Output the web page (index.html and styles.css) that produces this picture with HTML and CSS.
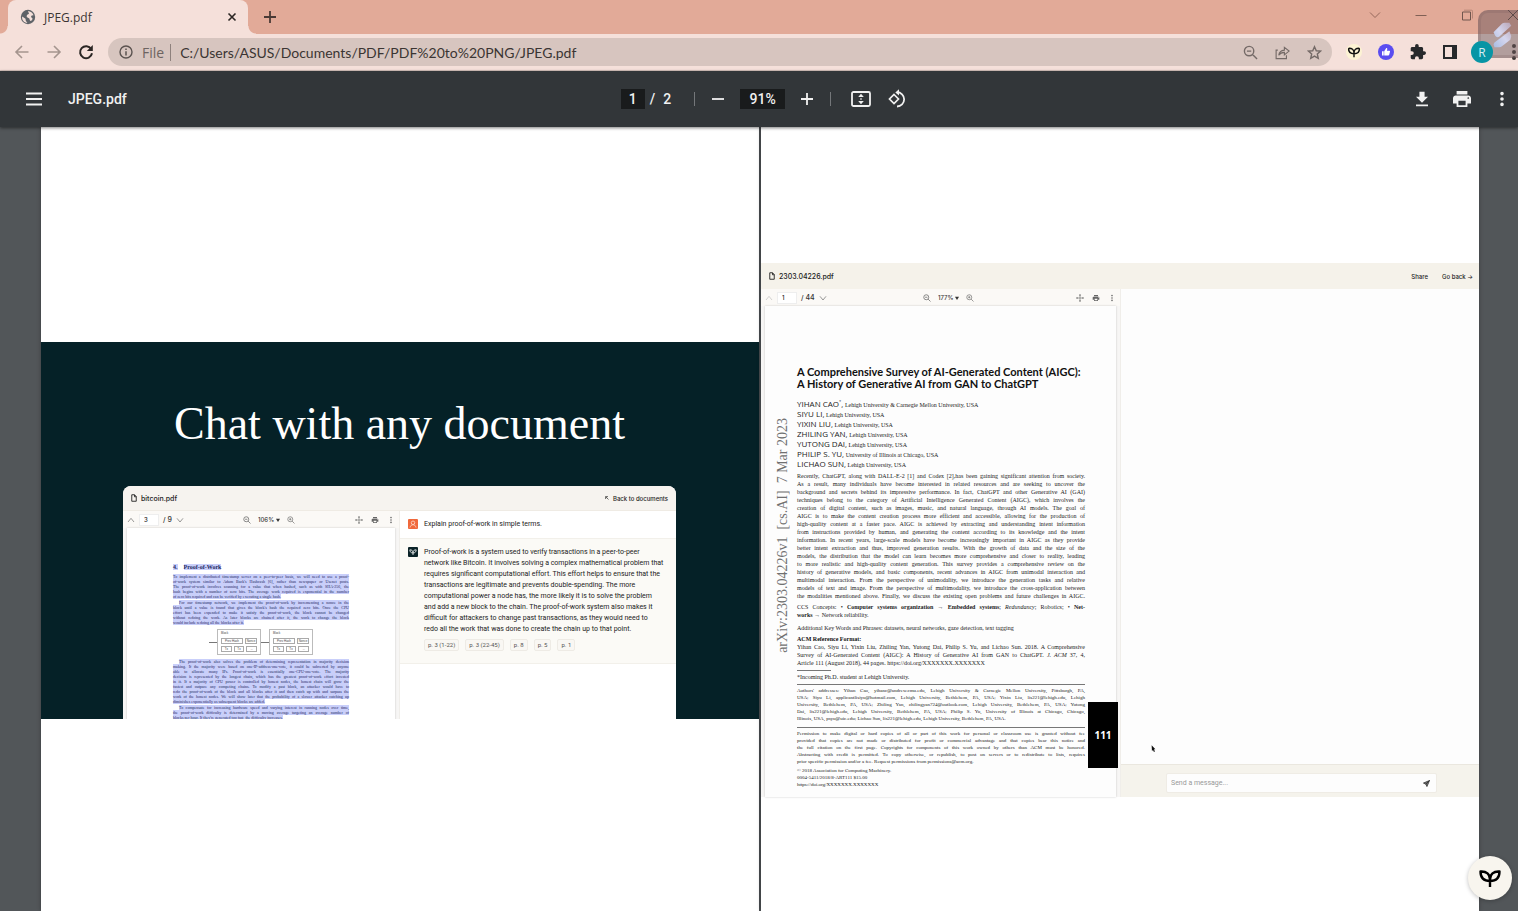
FILE: index.html
```html
<!DOCTYPE html>
<html lang="en">
<head>
<meta charset="utf-8">
<title>JPEG.pdf</title>
<link rel="stylesheet" href="styles.css">
</head>
<body>
<svg class="defs" aria-hidden="true">
  <symbol id="sprout" viewBox="0 0 24 24"><path d="M12 21v-8M12 15C6 15 2.500 11.500 2.500 5.500 8.500 5 12 8.500 12 13.500M12 15c6 0 9.500-3.500 9.500-9.500C15.500 5 12 8.500 12 13.500" fill="none" stroke="currentColor" stroke-width="2.400" stroke-linejoin="round"/></symbol>
  <symbol id="up" viewBox="0 0 12 12"><path d="M1.500 9 6 3.500 10.500 9" fill="none" stroke="currentColor"/></symbol>
  <symbol id="down" viewBox="0 0 12 12"><path d="M1.500 3.500 6 9 10.500 3.500" fill="none" stroke="currentColor"/></symbol>
  <symbol id="zoom-out" viewBox="0 0 16 16"><path d="M11.500 6.500a5 5 0 1 1-10 0 5 5 0 0 1 10 0M10.200 10.200l4.800 4.800M4.200 6.500h4.600" fill="none" stroke="currentColor" stroke-width="1.500"/></symbol>
  <symbol id="zoom-in" viewBox="0 0 16 16"><path d="M11.500 6.500a5 5 0 1 1-10 0 5 5 0 0 1 10 0M10.200 10.200l4.800 4.800M4.200 6.500h4.600M6.500 4.200v4.600" fill="none" stroke="currentColor" stroke-width="1.300"/></symbol>
  <symbol id="move" viewBox="0 0 16 16"><path d="M8 1v14M1 8h14" stroke="currentColor" stroke-width="1.200"/><path d="M8 0l2 3H6zM8 16l2-3H6zM0 8l3-2v4zM16 8l-3-2v4z" fill="currentColor"/></symbol>
  <symbol id="print" viewBox="0 0 24 24"><path d="M19 8H5c-1.660 0-3 1.340-3 3v6h4v4h12v-4h4v-6c0-1.660-1.340-3-3-3zm-3 11H8v-5h8v5zm3-7c-.55 0-1-.45-1-1s.45-1 1-1 1 .45 1 1-.45 1-1 1zm-1-9H6v4h12V3z" fill="currentColor"/></symbol>
  <symbol id="dots" viewBox="0 0 24 24"><path d="M12 8a2 2 0 1 0 0-4 2 2 0 0 0 0 4m0 2a2 2 0 1 0 0 4 2 2 0 0 0 0-4m0 6a2 2 0 1 0 0 4 2 2 0 0 0 0-4" fill="currentColor"/></symbol>
  <symbol id="file" viewBox="0 0 12 16"><path d="M1.500 1.500h5.500l3.500 3.500v9.500h-9zM7 1.500v4h3.500" fill="none" stroke="currentColor" stroke-width="1.800"/></symbol>
  <symbol id="caret" viewBox="0 0 6 6"><path d="M0 1h6L3 6z" fill="currentColor"/></symbol>
</svg>

<header class="browser">
  <div class="tabstrip">
    <div class="tab">
      <svg class="globe" viewBox="0 0 16 16"><circle cx="8" cy="8" r="7.200" fill="#5f6368"/><path d="M2.200 7.500l3.300 2.300.3 2 1.600 2.200c-3.500-.3-5.900-3.200-5.200-6.500zM8 2c2.600.2 4.700 1.800 5.500 4.200l-1.800.2-.8 1.700 1.600 1.200-.4 1.900-2 .9-.8-2.600-2.600-1.500.2-2L9 4.800z" fill="#f5e0da"/></svg>
      <span class="tab-title">JPEG.pdf</span>
      <button class="icon-btn tab-close" aria-label="Close tab"><svg viewBox="0 0 10 10"><path d="M1.500 1.500l7 7M8.500 1.500l-7 7" stroke="#2b2624" stroke-width="1.600"/></svg></button>
    </div>
    <button class="icon-btn new-tab" aria-label="New tab"><svg viewBox="0 0 14 14"><path d="M7 1v12M1 7h12" stroke="#4a3a36" stroke-width="1.800"/></svg></button>
    <div class="window-controls">
      <button class="icon-btn" aria-label="Search tabs"><svg viewBox="0 0 12 12"><path d="M1 3.500l5 5 5-5" fill="none" stroke="#95685b"/></svg></button>
      <button class="icon-btn" aria-label="Minimize"><svg viewBox="0 0 12 12"><path d="M.5 6.500h11" stroke="#806055"/></svg></button>
      <button class="icon-btn" aria-label="Maximize"><svg viewBox="0 0 12 12"><path d="M1.500 3h8v8h-8z" fill="none" stroke="#70564e"/><path d="M3 1.200h7.500a1 1 0 0 1 1 1V9.500" fill="none" stroke="#b58576"/></svg></button>
      <button class="icon-btn" aria-label="Close"><svg viewBox="0 0 12 12"><path d="M1 1l10 10M11 1L1 11" stroke="#54423d"/></svg></button>
    </div>
  </div>
  <div class="navbar">
    <button class="icon-btn nav" aria-label="Back"><svg viewBox="0 0 16 16"><path d="M14.500 8H2.500M8 2L2 8l6 6" fill="none" stroke="#a5958f" stroke-width="1.600"/></svg></button>
    <button class="icon-btn nav" aria-label="Forward"><svg viewBox="0 0 16 16"><path d="M1.500 8h12M8 2l6 6-6 6" fill="none" stroke="#a5958f" stroke-width="1.600"/></svg></button>
    <button class="icon-btn nav" aria-label="Reload"><svg viewBox="0 0 16 16"><path d="M13.200 5A6 6 0 1 0 14 9.300" fill="none" stroke="#2b2624" stroke-width="2"/><path d="M14.800 1v6h-6z" fill="#2b2624"/></svg></button>
    <div class="omnibox">
      <svg class="info" viewBox="0 0 14 14"><circle cx="7" cy="7" r="6" fill="none" stroke="#5b5350" stroke-width="1.400"/><path d="M7 6.200V10.500M7 3.500v1.600" stroke="#5b5350" stroke-width="1.500"/></svg>
      <span class="scheme">File</span>
      <input class="url" aria-label="Address" value="C:/Users/ASUS/Documents/PDF/PDF%20to%20PNG/JPEG.pdf">
      <button class="icon-btn omni" aria-label="Zoom"><svg viewBox="0 0 16 16"><use href="#zoom-out"/></svg></button>
      <button class="icon-btn omni" aria-label="Share"><svg viewBox="0 0 16 16"><path d="M3 5.500H1.200v9h11V11M4 11c.5-3.500 2.500-5.200 6-5.500V2.500L15 6.500l-5 4V7.800C7.500 7.800 5.500 8.500 4 11z" fill="none" stroke="currentColor" stroke-width="1.200"/></svg></button>
      <button class="icon-btn omni" aria-label="Bookmark"><svg viewBox="0 0 16 16"><path d="M8 1.800l1.900 4.300 4.600.4-3.500 3.100 1 4.600L8 11.800l-4 2.400 1-4.600L1.500 6.500l4.600-.4z" fill="none" stroke="currentColor" stroke-width="1.500"/></svg></button>
    </div>
    <div class="extensions">
      <button class="icon-btn ext-sprout" aria-label="Sprout extension"><svg viewBox="0 0 24 24"><use href="#sprout"/></svg></button>
      <button class="icon-btn" aria-label="Like extension"><svg viewBox="0 0 16 16"><circle cx="8" cy="8" r="8" fill="#5a4df0"/><path d="M4 7.300h1.700v4.200H4zM6.200 7.200L8.300 4c.9 0 1.200.7.900 1.500l-.3 1.200h2.300c.6 0 1 .5.800 1.100l-.8 2.900c-.1.500-.5.800-1 .8h-4z" fill="#fff"/></svg></button>
      <button class="icon-btn" aria-label="Extensions"><svg viewBox="1 1 22 22"><path d="M20.500 11H19V7c0-1.100-.9-2-2-2h-4V3.500a2.500 2.500 0 0 0-5 0V5H4c-1.100 0-2 .9-2 2v3.800h1.500a2.700 2.700 0 0 1 0 5.400H2V20c0 1.100.9 2 2 2h3.800v-1.500a2.700 2.700 0 0 1 5.400 0V22H17c1.100 0 2-.9 2-2v-4h1.500a2.500 2.500 0 0 0 0-5z" fill="#27292b"/></svg></button>
      <button class="icon-btn" aria-label="Side panel"><svg viewBox="0 0 16 16"><path d="M1 1h14v14H1zM3 3v10h7V3z" fill="#27292b" fill-rule="evenodd"/></svg></button>
      <button class="avatar" aria-label="Profile">R</button>
      <button class="icon-btn menu" aria-label="Chrome menu"><svg viewBox="4 4 16 16"><use href="#dots" width="24" height="24"/></svg></button>
    </div>
  </div>
  <div class="recorder"><svg viewBox="0 0 24 30"><defs><linearGradient id="rec" x1="1" y1="0" x2="0" y2="1"><stop offset="0" stop-color="#b9a4b4"/><stop offset=".5" stop-color="#d5d6ee"/><stop offset="1" stop-color="#a9bce2"/></linearGradient></defs><path d="M13 3q1-1 3-1h5l2 3-13 12q-2 1-4-1l-2-4zM21 11l2 5-1 4-9 7q-1 1-3 1H5l-1-3 1-2z" fill="url(#rec)"/></svg></div>
</header>

<div class="pdf-bar">
  <div class="pdf-left">
    <button class="icon-btn pdf-menu" aria-label="Menu"><svg viewBox="0 0 18 14"><path d="M1 1.500h16M1 7h16M1 12.500h16" stroke="#f1f1f1" stroke-width="2"/></svg></button>
    <h1>JPEG.pdf</h1>
  </div>
  <div class="pdf-center">
    <input class="page-no" aria-label="Page number" value="1"><span class="slash">/</span><span class="total">2</span>
    <span class="divider"></span>
    <button class="icon-btn" aria-label="Zoom out"><svg viewBox="0 0 14 14"><path d="M1 7h12" stroke="#f1f1f1" stroke-width="1.800"/></svg></button>
    <input class="zoom-level" aria-label="Zoom level" value="91%">
    <button class="icon-btn" aria-label="Zoom in"><svg viewBox="0 0 14 14"><path d="M1 7h12M7 1v12" stroke="#f1f1f1" stroke-width="1.800"/></svg></button>
    <span class="divider"></span>
    <button class="icon-btn wide" aria-label="Fit to page"><svg viewBox="0 0 20 16"><rect x="1" y="1" width="18" height="14" rx="1.500" fill="none" stroke="#f1f1f1" stroke-width="1.800"/><path d="M10 2.800L12.800 6H7.200zM10 13.200L7.200 10h5.600zM9.300 7.300h1.400v1.400H9.300z" fill="#f1f1f1"/></svg></button>
    <button class="icon-btn wide" aria-label="Rotate"><svg viewBox="0 0 20 20"><path d="M7 5.500L11.500 10 7 14.500 2.500 10z" fill="none" stroke="#f1f1f1" stroke-width="1.700"/><path d="M10 3.200a7 7 0 1 1 0 14.300" fill="none" stroke="#f1f1f1" stroke-width="1.800"/><path d="M12 .3v6.200L8.300 3.400z" fill="#f1f1f1"/></svg></button>
  </div>
  <div class="pdf-right">
    <button class="icon-btn" aria-label="Download"><svg viewBox="3 1 18 21"><path d="M19 9h-4V3H9v6H5l7 7 7-7zM5 18v2h14v-2H5z" fill="#f1f1f1"/></svg></button>
    <button class="icon-btn" aria-label="Print"><svg viewBox="2 2 20 20"><use href="#print" width="24" height="24"/></svg></button>
    <button class="icon-btn" aria-label="More"><svg viewBox="2 2 20 20"><use href="#dots" width="24" height="24"/></svg></button>
  </div>
</div>

<main class="viewer">
  <section class="sheet sheet-one">
    <div class="slide">
      <h2>Chat with any document</h2>
      <div class="card">
        <div class="app-head">
          <span class="doc-name"><svg viewBox="0 0 12 16"><use href="#file"/></svg>bitcoin.pdf</span>
          <a class="head-link" href="#"><svg viewBox="0 0 8 8"><path d="M7 7L1.500 1.500M1.200 6V1.200H6" fill="none" stroke="currentColor" stroke-width="1.300"/></svg>Back to documents</a>
        </div>
        <div class="card-body">
          <div class="reader">
            <div class="reader-bar">
              <div class="pager"><button class="mini" aria-label="Previous page"><svg viewBox="0 0 12 12"><use href="#up"/></svg></button><input aria-label="Page" value="3"><span>/ 9</span><button class="mini" aria-label="Next page"><svg viewBox="0 0 12 12"><use href="#down"/></svg></button></div>
              <div class="zoomer"><button class="mini" aria-label="Zoom out"><svg viewBox="0 0 16 16"><use href="#zoom-out"/></svg></button><span class="pick"><select aria-label="Zoom"><option>106%</option></select><svg viewBox="0 0 6 6"><use href="#caret"/></svg></span><button class="mini" aria-label="Zoom in"><svg viewBox="0 0 16 16"><use href="#zoom-in"/></svg></button></div>
              <div class="tools"><button class="mini" aria-label="Full screen"><svg viewBox="0 0 16 16"><use href="#move"/></svg></button><button class="mini" aria-label="Print"><svg viewBox="0 0 24 24"><use href="#print"/></svg></button><button class="mini" aria-label="More"><svg viewBox="4 2 16 20"><use href="#dots" width="24" height="24"/></svg></button></div>
            </div>
            <div class="paper bitcoin">
              <h3><mark>4.</mark><mark>Proof-of-Work</mark></h3>
              <p>
                <span>To implement a distributed timestamp server on a peer-to-peer basis, we will need to use a proof-</span>
                <span>of-work system similar to Adam Back's Hashcash [6], rather than newspaper or Usenet posts.</span>
                <span>The proof-of-work involves scanning for a value that when hashed, such as with SHA-256, the</span>
                <span>hash begins with a number of zero bits. The average work required is exponential in the number</span>
                <span class="end">of zero bits required and can be verified by executing a single hash.</span>
              </p>
              <p>
                <span class="indent">For our timestamp network, we implement the proof-of-work by incrementing a nonce in the</span>
                <span>block until a value is found that gives the block's hash the required zero bits. Once the CPU</span>
                <span>effort has been expended to make it satisfy the proof-of-work, the block cannot be changed</span>
                <span>without redoing the work. As later blocks are chained after it, the work to change the block</span>
                <span class="end">would include redoing all the blocks after it.</span>
              </p>
              <div class="chain">
                <i class="arrow"></i>
                <div class="block"><b>Block</b><div><span class="hash">Prev Hash</span><span>Nonce</span></div><div><span>Tx</span><span>Tx</span><span>...</span></div></div>
                <i class="arrow"></i>
                <div class="block"><b>Block</b><div><span class="hash">Prev Hash</span><span>Nonce</span></div><div><span>Tx</span><span>Tx</span><span>...</span></div></div>
              </div>
              <p>
                <span class="indent">The proof-of-work also solves the problem of determining representation in majority decision</span>
                <span>making. If the majority were based on one-IP-address-one-vote, it could be subverted by anyone</span>
                <span>able to allocate many IPs. Proof-of-work is essentially one-CPU-one-vote. The majority</span>
                <span>decision is represented by the longest chain, which has the greatest proof-of-work effort invested</span>
                <span>in it. If a majority of CPU power is controlled by honest nodes, the honest chain will grow the</span>
                <span>fastest and outpace any competing chains. To modify a past block, an attacker would have to</span>
                <span>redo the proof-of-work of the block and all blocks after it and then catch up with and surpass the</span>
                <span>work of the honest nodes. We will show later that the probability of a slower attacker catching up</span>
                <span class="end">diminishes exponentially as subsequent blocks are added.</span>
              </p>
              <p>
                <span class="indent">To compensate for increasing hardware speed and varying interest in running nodes over time,</span>
                <span>the proof-of-work difficulty is determined by a moving average targeting an average number of</span>
                <span class="end">blocks per hour. If they're generated too fast, the difficulty increases.</span>
              </p>
            </div>
          </div>
          <div class="chat">
            <div class="message"><svg class="face user" viewBox="0 0 20 20"><circle cx="10" cy="7.500" r="3.500" fill="none" stroke="#ffe3d6" stroke-width="1.500"/><path d="M4 17c1-4 3-5.500 6-5.500s5 1.500 6 5.500" fill="none" stroke="#ffe3d6" stroke-width="1.500"/></svg><p>Explain proof-of-work in simple terms.</p></div>
            <div class="message reply"><span class="face bot"><svg viewBox="0 0 24 24"><use href="#sprout"/></svg></span>
              <div><p>Proof-of-work is a system used to verify transactions in a peer-to-peer<br>network like Bitcoin. It involves solving a complex mathematical problem that<br>requires significant computational effort. This effort helps to ensure that the<br>transactions are legitimate and prevents double-spending. The more<br>computational power a node has, the more likely it is to solve the problem<br>and add a new block to the chain. The proof-of-work system also makes it<br>difficult for attackers to change past transactions, as they would need to<br>redo all the work that was done to create the chain up to that point.</p>
              <div class="refs"><button>p. 3 (1-22)</button><button>p. 3 (22-45)</button><button>p. 8</button><button>p. 5</button><button>p. 1</button></div></div>
            </div>
          </div>
        </div>
      </div>
    </div>
  </section>

  <section class="sheet sheet-two">
    <div class="app">
      <div class="app-head">
        <span class="doc-name"><svg viewBox="0 0 12 16"><use href="#file"/></svg>2303.04226.pdf</span>
        <nav><a class="head-link" href="#">Share</a><a class="head-link" href="#">Go back →</a></nav>
      </div>
      <div class="app-body">
        <div class="reader">
          <div class="reader-bar">
            <div class="pager"><button class="mini faint" aria-label="Previous page"><svg viewBox="0 0 12 12"><use href="#up"/></svg></button><input aria-label="Page" value="1"><span>/ 44</span><button class="mini" aria-label="Next page"><svg viewBox="0 0 12 12"><use href="#down"/></svg></button></div>
            <div class="zoomer"><button class="mini" aria-label="Zoom out"><svg viewBox="0 0 16 16"><use href="#zoom-out"/></svg></button><span class="pick"><select aria-label="Zoom"><option>177%</option></select><svg viewBox="0 0 6 6"><use href="#caret"/></svg></span><button class="mini" aria-label="Zoom in"><svg viewBox="0 0 16 16"><use href="#zoom-in"/></svg></button></div>
            <div class="tools"><button class="mini" aria-label="Full screen"><svg viewBox="0 0 16 16"><use href="#move"/></svg></button><button class="mini" aria-label="Print"><svg viewBox="0 0 24 24"><use href="#print"/></svg></button><button class="mini" aria-label="More"><svg viewBox="4 2 16 20"><use href="#dots" width="24" height="24"/></svg></button></div>
          </div>
          <div class="paper survey">
            <div class="stamp">arXiv:2303.04226v1&nbsp; [cs.AI]&nbsp; 7 Mar 2023</div>
            <article>
              <h3>A Comprehensive Survey of AI-Generated Content (AIGC):<br>A History of Generative AI from GAN to ChatGPT</h3>
              <ul class="authors">
                <li><b>YIHAN CAO<sup>*</sup>,</b> Lehigh University &amp; Carnegie Mellon University, USA</li>
                <li><b>SIYU LI,</b> Lehigh University, USA</li>
                <li><b>YIXIN LIU,</b> Lehigh University, USA</li>
                <li><b>ZHILING YAN,</b> Lehigh University, USA</li>
                <li><b>YUTONG DAI,</b> Lehigh University, USA</li>
                <li><b>PHILIP S. YU,</b> University of Illinois at Chicago, USA</li>
                <li><b>LICHAO SUN,</b> Lehigh University, USA</li>
              </ul>
              <p class="abstract">
                <span>Recently, ChatGPT, along with DALL-E-2 [1] and Codex [2],has been gaining significant attention from society.</span>
                <span>As a result, many individuals have become interested in related resources and are seeking to uncover the</span>
                <span>background and secrets behind its impressive performance. In fact, ChatGPT and other Generative AI (GAI)</span>
                <span>techniques belong to the category of Artificial Intelligence Generated Content (AIGC), which involves the</span>
                <span>creation of digital content, such as images, music, and natural language, through AI models. The goal of</span>
                <span>AIGC is to make the content creation process more efficient and accessible, allowing for the production of</span>
                <span>high-quality content at a faster pace. AIGC is achieved by extracting and understanding intent information</span>
                <span>from instructions provided by human, and generating the content according to its knowledge and the intent</span>
                <span>information. In recent years, large-scale models have become increasingly important in AIGC as they provide</span>
                <span>better intent extraction and thus, improved generation results. With the growth of data and the size of the</span>
                <span>models, the distribution that the model can learn becomes more comprehensive and closer to reality, leading</span>
                <span>to more realistic and high-quality content generation. This survey provides a comprehensive review on the</span>
                <span>history of generative models, and basic components, recent advances in AIGC from unimodal interaction and</span>
                <span>multimodal interaction. From the perspective of unimodality, we introduce the generation tasks and relative</span>
                <span>models of text and image. From the perspective of multimodality, we introduce the cross-application between</span>
                <span>the modalities mentioned above. Finally, we discuss the existing open problems and future challenges in AIGC.</span>
              </p>
              <p class="concepts">
                <span>CCS Concepts: • <b>Computer systems organization</b> → <b>Embedded systems</b>; <i>Redundancy</i>; Robotics; • <b>Net-</b></span>
                <span class="end"><b>works</b> → Network reliability.</span>
              </p>
              <p class="keywords"><span class="end">Additional Key Words and Phrases: datasets, neural networks, gaze detection, text tagging</span></p>
              <h4>ACM Reference Format:</h4>
              <p>
                <span>Yihan Cao, Siyu Li, Yixin Liu, Zhiling Yan, Yutong Dai, Philip S. Yu, and Lichao Sun. 2018. A Comprehensive</span>
                <span>Survey of AI-Generated Content (AIGC): A History of Generative AI from GAN to ChatGPT. <i>J. ACM</i> 37, 4,</span>
                <span class="end">Article 111 (August 2018), 44 pages. https://doi.org/XXXXXXX.XXXXXXX</span>
              </p>
              <p class="footnote"><span class="end">*Incoming Ph.D. student at Lehigh University.</span></p>
              <p class="small ruled">
                <span>Authors' addresses: Yihan Cao, yihanc@andrew.cmu.edu, Lehigh University &amp; Carnegie Mellon University, Pittsburgh, PA,</span>
                <span>USA; Siyu Li, applicantlisiyu@hotmail.com, Lehigh University, Bethlehem, PA, USA; Yixin Liu, lis221@lehigh.edu, Lehigh</span>
                <span>University, Bethlehem, PA, USA; Zhiling Yan, zhilingyan724@outlook.com, Lehigh University, Bethlehem, PA, USA; Yutong</span>
                <span>Dai, lis221@lehigh.edu, Lehigh University, Bethlehem, PA, USA; Philip S. Yu, University of Illinois at Chicago, Chicago,</span>
                <span class="end">Illinois, USA, psyu@uic.edu; Lichao Sun, lis221@lehigh.edu, Lehigh University, Bethlehem, PA, USA.</span>
              </p>
              <p class="small ruled permission">
                <span>Permission to make digital or hard copies of all or part of this work for personal or classroom use is granted without fee</span>
                <span>provided that copies are not made or distributed for profit or commercial advantage and that copies bear this notice and</span>
                <span>the full citation on the first page. Copyrights for components of this work owned by others than ACM must be honored.</span>
                <span>Abstracting with credit is permitted. To copy otherwise, or republish, to post on servers or to redistribute to lists, requires</span>
                <span class="end">prior specific permission and/or a fee. Request permissions from permissions@acm.org.</span>
              </p>
              <p class="small imprint">
                <span class="end">© 2018 Association for Computing Machinery.</span>
                <span class="end">0004-5411/2018/8-ART111 $15.00</span>
                <span class="end">https://doi.org/XXXXXXX.XXXXXXX</span>
              </p>
            </article>
            <div class="folio">111</div>
          </div>
        </div>
        <div class="thread">
          <svg class="pointer" viewBox="0 0 8 12"><path d="M1 0l6 6.500H4.800L6.200 10l-1.500.8L3.200 7.500 1.500 9z" fill="#111"/></svg>
          <form class="composer"><label><input aria-label="Message" placeholder="Send a message..."><button class="mini" type="button" aria-label="Send"><svg viewBox="0 0 16 16"><path d="M15 1L1 7l5.500 2.500L9 15zM15 1L6.500 9.500" fill="#777" stroke="#222" stroke-width="1.600"/></svg></button></label></form>
        </div>
      </div>
    </div>
  </section>
</main>
<button class="fab" aria-label="Open assistant"><svg viewBox="0 0 24 24"><use href="#sprout"/></svg></button>
</body>
</html>
```
FILE: styles.css
```css
* { box-sizing: border-box; }
body { margin: 0; height: 100vh; overflow: hidden; display: flex; flex-direction: column; background: #525659; font-family: "Inter", sans-serif; }
h1, h2, h3, h4, p, ul { margin: 0; padding: 0; }
button, input, select { font: inherit; color: inherit; border: 0; padding: 0; margin: 0; background: none; min-width: 0; }
svg { display: block; flex: none; }
a { color: inherit; text-decoration: none; }
.defs { position: absolute; width: 0; height: 0; }
.icon-btn { display: grid; place-items: center; width: 32px; height: 28px; flex: none; }
.icon-btn svg { width: 16px; height: 16px; }

/* Browser chrome */
.browser { position: relative; flex: none; overflow: hidden; font-family: "Open Sans", sans-serif; color: #3b3533; background: #f5e0da; border-bottom: 1px solid #d9c5bf; }
.tabstrip { display: flex; height: 34px; padding-left: 8px; background: #e2aa98; }
.tab { position: relative; display: flex; align-items: center; width: 240px; padding: 0 2px 0 12px; border-radius: 8px 8px 0 0; background: #f5e0da; }
.tab::before, .tab::after { content: ""; position: absolute; bottom: 0; width: 8px; height: 8px; }
.tab::before { right: 100%; background: radial-gradient(circle at 0 0, #e2aa98 7px, #f5e0da 8px); }
.tab::after { left: 100%; background: radial-gradient(circle at 100% 0, #e2aa98 7px, #f5e0da 8px); }
.globe { width: 16px; height: 16px; }
.tab-title { flex: 1; padding-left: 8px; font-size: 12px; }
.tab-close { width: 28px; }
.tab-close svg { width: 10px; height: 10px; }
.new-tab { width: 44px; height: 34px; }
.new-tab svg { width: 14px; height: 14px; }
.window-controls { display: flex; gap: 14px; margin: 1px -11px 0 auto; }
.window-controls svg { width: 12px; height: 12px; }
.navbar { display: flex; align-items: center; height: 36px; padding-left: 6px; }
.nav svg { width: 16px; }
.omnibox { flex: 1; display: flex; align-items: center; height: 28px; margin-left: 6px; padding: 0 2px 0 11px; border-radius: 14px; background: #d7c5bf; font-size: 14px; }
.info { width: 14px; height: 14px; }
.scheme { margin-left: 9px; padding-right: 6px; border-right: 1px solid #8e817d; line-height: 17px; color: #6d6461; }
.url { flex: 1; margin-left: 9px; outline: 0; font-family: Lato, sans-serif; }
.omni { color: #746a67; }
.omni svg { width: 15px; height: 15px; }
.extensions { display: flex; align-items: center; padding-left: 6px; margin-right: -12px; }
.ext-sprout svg { padding: 1px; border-radius: 8px; background: #fdf3d4; color: #111; }
.avatar { position: relative; z-index: 1; width: 22px; height: 22px; margin: 0 5px; border-radius: 11px; background: #0795a5; color: #d9eef2; font-size: 12px; text-align: center; }
.recorder { position: absolute; right: 0; top: 10px; width: 40px; height: 48px; padding: 8px 0 0 8px; border: 3px solid rgb(110 85 88 / 20%); border-right: 0; border-radius: 10px 0 0 10px; background: rgb(105 85 90 / 48%); }
.recorder svg { width: 24px; height: 28px; }

/* Document toolbar */
.pdf-bar { position: relative; z-index: 1; flex: none; display: grid; grid-template-columns: 1fr auto 1fr; align-items: center; height: 56px; background: #323639; color: #f1f1f1; font-family: Roboto, sans-serif; font-size: 14px; font-weight: 500; box-shadow: 0 1px 3px rgb(0 0 0 / 50%); }
.pdf-left { display: flex; align-items: center; gap: 18px; padding-left: 18px; }
.pdf-menu svg { width: 18px; height: 14px; }
h1 { font-size: 14px; font-weight: 500; }
.pdf-center { display: flex; align-items: center; padding-left: 18px; }
.page-no, .zoom-level { height: 20px; background: #191b1c; text-align: center; }
.page-no { width: 24px; }
.slash { padding: 0 8px 0 5px; }
.zoom-level { width: 45px; margin: 0 6px; }
.divider { width: 1px; height: 14px; margin: 0 7px 0 23px; background: #74777a; }
.zoom-level + .icon-btn + .divider { margin: 0 12px 0 7px; }
.pdf-center .icon-btn svg { width: 14px; height: 14px; }
.pdf-center .wide { width: 36px; }
.pdf-center .wide svg { width: 20px; height: 20px; }
.pdf-right { display: flex; justify-content: flex-end; gap: 8px; }
.pdf-right svg { width: 18px; height: 18px; }

/* Pages */
.viewer { flex: 1; min-height: 0; overflow: hidden; display: grid; grid-template-columns: 1fr 1fr; gap: 2px; padding: 0 39px 0 41px; }
.sheet { min-width: 0; background: #fff; box-shadow: 0 0 4px rgb(0 0 0 / 30%); }
.sheet-one { padding-top: 215px; }
.sheet-two { padding-top: 136px; }
.slide { aspect-ratio: 718 / 377; overflow: hidden; padding: 52px 83px 0 82px; background: #052127; color: #fff; }
h2 { padding-left: 51px; font: 400 46px/60px "Liberation Serif", serif; }
.card { margin-top: 32px; border-radius: 8px 8px 0 0; overflow: hidden; background: #fff; color: #222; }
.card-body { display: grid; grid-template-columns: 277px 1fr; }
.app-head { display: flex; align-items: center; justify-content: space-between; height: 25px; padding: 0 8px; background: #f6f3ef; border-bottom: 1px solid #efebe4; font-size: 7px; color: #222; }
.app-head nav { display: flex; gap: 14px; }
.doc-name, .head-link { display: flex; align-items: center; gap: 4px; font-weight: 500; }
.doc-name svg { width: 6px; height: 8px; }
.head-link { font-size: 6px; }
.head-link svg { width: 4px; height: 4px; }
.reader-bar { display: grid; grid-template-columns: 1fr auto 1fr; align-items: center; height: 17px; padding: 0 4px; background: #fbf9f6; color: #666; font-size: 6px; font-weight: 500; }
.reader-bar > div { display: flex; align-items: center; gap: 4px; }
.reader-bar .zoomer { gap: 7px; padding-left: 16px; }
.reader-bar .tools { justify-content: flex-end; gap: 8px; }
.pager input { width: 20px; height: 12px; padding-left: 4px; background: #fff; border: 1px solid #eee; color: #222; }
.pager span { color: #333; font-size: 7px; }
.mini { display: block; }
.mini svg { width: 8px; height: 8px; }
.faint { opacity: .4; }
.pick { display: flex; align-items: center; gap: 1px; color: #333; }
.pick select { appearance: none; }
.pick svg { width: 4px; height: 4px; }
.reader { border-right: 1px solid #f0eeea; background: #f7f6f5; }
.paper { margin: 0 4px; background: #fff; box-shadow: 0 0 2px rgb(0 0 0 / 20%); }
.paper p > span { display: block; white-space: nowrap; text-align: justify; text-align-last: justify; }
.paper p > .end { text-align-last: left; }

.bitcoin { padding: 36px 46px 20px; font: 400 4px/5px "Liberation Serif", serif; color: #23295f; }
.bitcoin h3 { display: flex; gap: 6px; margin-bottom: 4px; font-size: 6px; line-height: 6px; }
mark { background: #c9cffa; color: #23295f; }
.bitcoin p { margin-bottom: 1px; }
.bitcoin p > span { background: #c9cffa; }
.bitcoin p > .end { width: fit-content; }
.bitcoin p > .indent { margin-left: 6px; }
.chain { display: flex; align-items: center; justify-content: center; margin: 4px 0 4px; font: 400 3px/5px "Liberation Sans", sans-serif; color: #444; }
.chain .arrow { width: 8px; height: 1px; background: #777; }
.block { display: grid; gap: 2px; width: 44px; padding: 1px 3px 2px; border: 1px solid #bbb; }
.block b { font-weight: 400; }
.block div { display: flex; gap: 2px; }
.block div span { flex: 1; border: 1px solid #aaa; line-height: 4px; text-align: center; }
.block .hash { flex: 2; white-space: nowrap; }

.message { display: flex; gap: 6px; padding: 8px 6px 8px 8px; font: 400 7px/11px Roboto, sans-serif; border-bottom: 1px solid #f2f0ea; }
.face { flex: none; width: 10px; height: 10px; border-radius: 1px; }
.user { background: #f0693c; }
.bot { display: grid; place-items: center; background: #0b2328; color: #fff; }
.bot svg { width: 8px; height: 8px; }
.reply { padding-bottom: 12px; background: #fbfaf6; }
.reply p { white-space: nowrap; }
.refs { display: flex; gap: 6px; margin-top: 4px; font: 400 6px/10px Roboto, sans-serif; }
.refs button { padding: 0 3px; border: 1px solid #eeebe5; border-radius: 2px; background: #f9f7f3; color: #555; }

.sheet-two .app-head { height: 26px; padding-right: 6px; background: #f5f2ea; border: 0; }
.app-body { display: grid; grid-template-columns: 360px 1fr; }
.survey { position: relative; display: flex; gap: 8px; padding: 60px 31px 9px 11px; background: #fdfdfd; font: 400 6px/8px "Liberation Serif", serif; color: #222; }
.stamp { align-self: flex-start; width: 13px; margin-top: 52px; writing-mode: vertical-rl; transform: rotate(180deg); font-size: 14px; line-height: 13px; color: #707070; white-space: nowrap; }
article { flex: 1; min-width: 0; }
.survey h3 { font: 700 11px/12px Lato, sans-serif; color: #111; white-space: nowrap; }
.authors { margin-top: 9px; list-style: none; line-height: 10px; }
.authors li { height: 10px; }
.authors b { font: 400 8px/10px "Open Sans", sans-serif; }
.authors sup { font-size: 4px; line-height: 0; }
.abstract { margin-top: 3px; }
.concepts { margin: 3px 0 5px; }
.survey h4 { margin-top: 3px; font-size: 6px; line-height: 8px; color: #111; }
.footnote { margin-top: 3px; }
.footnote::before { content: ""; display: block; width: 34px; margin-bottom: 2px; border-top: 1px solid #777; }
.small { font-size: 5px; line-height: 7px; }
.ruled { margin-top: 3px; padding-top: 2px; border-top: 1px solid #777; }
.permission { margin-top: 5px; padding-top: 2px; }
.imprint { margin-top: 2px; }
.folio { position: absolute; right: -2px; bottom: 29px; width: 30px; background: #000; color: #fff; font: 700 10px/66px "Open Sans", sans-serif; text-align: center; }
.thread { position: relative; display: flex; flex-direction: column; justify-content: flex-end; background: #fdfdfd; }
.pointer { position: absolute; left: 30px; bottom: 44px; width: 5px; height: 8px; }
.composer { padding: 8px 42px 4px 45px; border-top: 1px solid #eae7df; background: #f5f3ec; }
.composer label { display: flex; align-items: center; height: 20px; padding: 0 6px 0 4px; background: #fdfdfd; border: 1px solid #efece5; border-radius: 2px; }
.composer input { flex: 1; font: 400 7px Roboto, sans-serif; }
.composer input::placeholder { color: #999; }
.composer .mini svg { width: 7px; height: 7px; }

.fab { position: fixed; z-index: 2; right: 6px; bottom: 11px; display: grid; place-items: center; width: 44px; height: 44px; border-radius: 22px; background: #f8f5ee; color: #000; box-shadow: 0 1px 4px rgb(0 0 0 / 25%); }
.fab svg { width: 24px; height: 24px; }
```
